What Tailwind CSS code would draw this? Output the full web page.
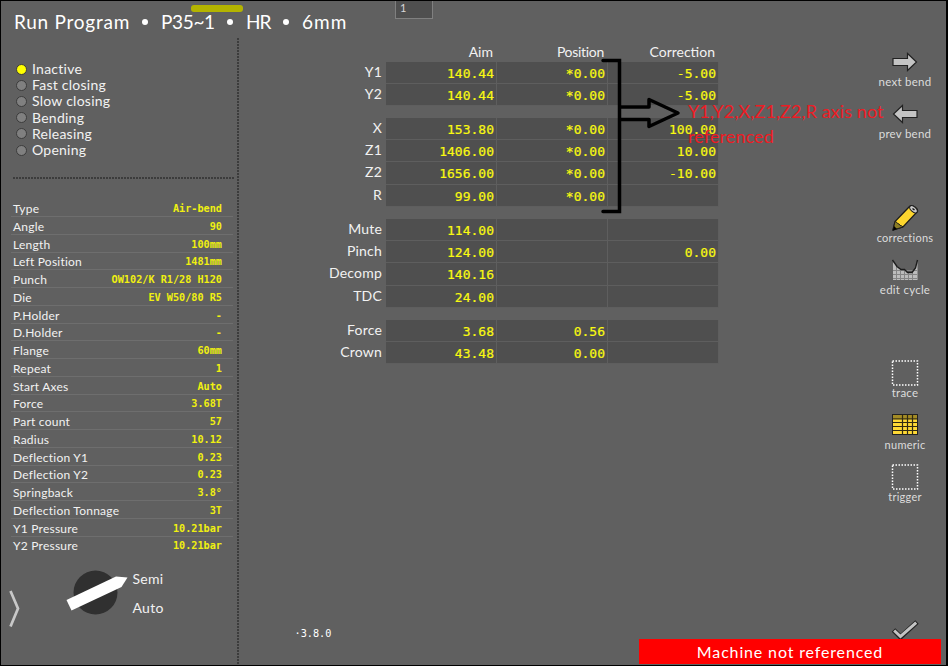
<!DOCTYPE html>
<html lang="en">
<head>
<meta charset="utf-8">
<title>Run Program</title>
<script src="https://cdn.jsdelivr.net/npm/@tailwindcss/browser@4"></script>
</head>
<body class="w-[948px] h-[666px] overflow-hidden bg-[#606060] font-[Lato,sans-serif] text-[#f2f2f2]">
<div class="relative w-[948px] h-[666px] border-t border-l border-r-2 border-b border-black flex">

  <!-- left column: title, machine state, program data, mode switch -->
  <aside class="w-[237px] shrink-0 flex flex-col">
    <h1 class="h-[42px] pl-[13px] flex items-center text-[19px] leading-6 whitespace-nowrap text-white">
      <span class="w-[125px] shrink-0 tracking-[0.750px]">Run Program</span>
      <span class="w-[22px] shrink-0"><i class="block size-[6px] rounded-full bg-white ml-[3px]"></i></span>
      <span class="w-[65px] shrink-0 tracking-[-0.350px]">P35~1</span>
      <span class="w-[20px] shrink-0"><i class="block size-[6px] rounded-full bg-white ml-px"></i></span>
      <span class="w-[36px] shrink-0 tracking-[-0.900px]">HR</span>
      <span class="w-[20px] shrink-0"><i class="block size-[6px] rounded-full bg-white ml-px"></i></span>
      <span class="shrink-0 tracking-[1px]">6mm</span>
    </h1>
    <ul id="states" class="mt-[18px] h-[98px] pl-[15px] text-[14px] tracking-[0.250px]"></ul>
    <div class="ml-3 mt-[18px] h-[2px] w-[222px] bg-[repeating-linear-gradient(90deg,#3c3c3c_0_2px,transparent_2px_3px)]"></div>
    <dl id="data" class="ml-[10px] mt-[20.300px] w-[222px] text-[12px]"></dl>
    <div class="relative mt-[13.700px] h-[66px] flex">
      <svg class="w-[128px] h-[66px] shrink-0" viewBox="0 0 128 66" fill="none">
        <circle cx="94.500" cy="24.500" r="22" fill="#303030"/>
        <path d="M65.500 32 115 8.500 126.500 9.500 120.500 19 70.500 42.500Z" fill="#fff"/>
        <path d="M9.500 23 17 40.500 9.500 58.500" stroke="#c8c8c8" stroke-width="2.700"/>
      </svg>
      <div class="pl-[3.500px] pt-px text-[14px] tracking-[0.3px] flex flex-col gap-[9px] leading-5">
        <span>Semi</span><span>Auto</span>
      </div>
    </div>
  </aside>
  <div class="mt-[37px] h-[626px] w-[2px] shrink-0 -ml-px bg-[repeating-linear-gradient(180deg,#3c3c3c_0_2px,transparent_2px_3px)]"></div>

  <!-- axis table -->
  <main class="w-[610px] shrink-0 flex flex-col">
    <div class="h-[18px] ml-[156px] w-[38px] bg-[#4f4f4f] border border-t-0 border-[#808080] text-[11px] leading-[14px] pl-[4px] text-[#d8d8d8]">1</div>
    <div class="mt-[24px] h-[18.500px] grid grid-cols-[147px_111px_111px_111px] text-right text-[14px] leading-[18px]">
      <span></span><span class="pr-[4px]">Aim</span><span class="pr-[4px] tracking-[-0.300px]">Position</span><span class="pr-[4px]">Correction</span>
    </div>
    <div id="axes" class="w-[480px] flex flex-col gap-[12.400px]"></div>
    <div class="mt-[264px] ml-[55.500px] font-[DejaVu_Sans_Mono,monospace] text-[10.200px] leading-3 text-white"><span>·3.8.0</span></div>
  </main>

  <!-- tool column -->
  <nav class="w-[88px] shrink-0 ml-[12px] mt-[48px] h-[600px] flex flex-col items-center text-[11.500px] leading-[14px] tracking-[0.250px] text-[#dcdcdc]">
    <div class="h-[52px] flex flex-col items-center">
      <svg class="w-[26px] h-[24px] shrink-0" viewBox="0 0 26 24"><path d="M1 9.500H15.500V4.500L24.500 13 15.500 21.500V16.500H1Z" fill="#c4c4c4" stroke="#222" stroke-width="1.200"/></svg>
      <span class="mt-[2px]">next bend</span>
    </div>
    <div class="h-[104px] flex flex-col items-center">
      <svg class="w-[26px] h-[24px] shrink-0" viewBox="0 0 26 24"><path d="M25 9.500H10.500V4.500L1.500 13 10.500 21.500V16.500H25Z" fill="#c4c4c4" stroke="#222" stroke-width="1.200"/></svg>
      <span class="mt-[2px]">prev bend</span>
    </div>
    <div class="h-[52px] flex flex-col items-center">
      <svg class="w-[28px] h-[26px] shrink-0" viewBox="0 0 28 26">
        <path d="M2 25 4 16.500 18.500 1.500Q20 0 23 1.500 27 3.500 26.500 6.500L12 22Z" fill="#fdd62e" stroke="#1c1c1c" stroke-width="1.300"/>
        <path d="M2 25 4 16.500Q5.500 16.500 6.500 18.500 8.500 18.500 9 20.500 11 20.500 12 22Z" fill="#8a7c26" stroke="#1c1c1c"/>
        <path d="M2 25.500 3 21 6 24Z" fill="#000"/>
        <ellipse cx="22.500" cy="4.300" rx="4.500" ry="2.500" transform="rotate(42 22.500 4.300)" fill="#c8c8c8" stroke="#1c1c1c"/>
        <path d="M21.500 3.500 23.500 5" stroke="#111" stroke-width="1.500"/>
      </svg>
      <span class="text-[11px]">corrections</span>
    </div>
    <div class="h-[103px] flex flex-col items-center">
      <svg class="w-[28px] h-[25px] shrink-0" viewBox="0 0 28 25">
        <path d="M2 3 6 9 10 12.500H14L17 15.500H21L24 12 26.500 3V23H2Z" fill="#bcbcbc"/>
        <path d="M2 13.500H26M2 17.500H26M2 21.500H26M5.500 9V23M9.500 12V23M13.500 13V23M17.500 15V23M21.500 15V23" stroke="#858585"/>
        <path d="M1.500 3 6 9.500 10 12.500H13.500L16.500 15.500H21L24.500 11 26.500 3" fill="none" stroke="#1c1c1c" stroke-width="1.400"/>
      </svg>
      <span class="mt-px">edit cycle</span>
    </div>
    <div class="h-[52px] flex flex-col items-center">
      <svg class="w-[28px] h-[26px] shrink-0" viewBox="0 0 28 26"><rect x="1.500" y="1" width="25" height="24" fill="none" stroke="#fff" stroke-width="1.500" stroke-dasharray="1.500 1.500"/></svg>
      <span>trace</span>
    </div>
    <div class="h-[52px] flex flex-col items-center">
      <svg class="w-[28px] h-[26px] shrink-0" viewBox="0 0 28 26">
        <rect x="1.500" y="2.500" width="25" height="20" fill="#fdd835" stroke="#222"/>
        <rect x="2" y="3" width="24" height="3.500" fill="#a38b25"/>
        <path d="M2 6.800H26M2 10.500H26M2 14.500H26M2 18.500H26M11.500 3V22M16.500 3V22M21.500 3V22" stroke="#302a12" stroke-width="1.200"/>
      </svg>
      <span class="text-[11px]">numeric</span>
    </div>
    <div class="h-[156px] flex flex-col items-center">
      <svg class="w-[28px] h-[26px] shrink-0" viewBox="0 0 28 26"><rect x="1.500" y="1" width="25" height="24" fill="none" stroke="#fff" stroke-width="1.500" stroke-dasharray="1.500 1.500"/></svg>
      <span class="text-[11px]">trigger</span>
    </div>
    <svg class="w-[28px] h-[20px] shrink-0" viewBox="0 0 28 20"><path d="M2.500 10 9.500 17 26 2" fill="none" stroke="#222" stroke-width="5"/><path d="M3.200 10.500 9.500 16.500 25.200 2.700" fill="none" stroke="#c4c4c4" stroke-width="3"/></svg>
  </nav>

  <!-- overlays -->
  <div class="absolute left-[190px] top-[4px] w-[52px] h-[7px] rounded-[3px] bg-[#b4b400]"></div>
  <svg class="absolute left-[600px] top-[56px] w-[84px] h-[160px]" viewBox="0 0 84 160" fill="none" stroke="#000" stroke-width="3.500">
    <path d="M2 3.500H18.500V154.500H2" stroke-linecap="round"/>
    <path d="M19 50H48V42.500L77 56 48 69.500V62.500H19" stroke-width="3.500" stroke-linejoin="round"/>
  </svg>
  <p class="absolute left-[687px] top-[98px] w-[205px] text-[18px] leading-[24.500px] text-[#ed1c24]"><span class="whitespace-nowrap tracking-[0.080px]">Y1,Y2,X,Z1,Z2,R axis not</span><br><span class="tracking-[0.100px]">referenced</span></p>
  <div class="absolute left-[638px] top-[638px] w-[302px] h-[25px] bg-[#ff0000] text-white text-center text-[16px] leading-[26px] tracking-[0.850px]">Machine not referenced</div>
</div>

<script>
const states = ["Inactive", "Fast closing", "Slow closing", "Bending", "Releasing", "Opening"];
document.getElementById("states").innerHTML = states.map((s, i) =>
  `<li class="h-[16.200px] flex items-center leading-4"><i class="block size-[11px] rounded-full border-[1.500px] border-[#3c3c3c] mr-[5px] ${i ? "bg-[#808080]" : "bg-[#ffff00]"}"></i>${s}</li>`).join("");

const data = [["Type","Air-bend"],["Angle","90"],["Length","100mm"],["Left Position","1481mm"],["Punch","OW102/K R1/28 H120"],["Die","EV W50/80 R5"],["P.Holder","-"],["D.Holder","-"],["Flange","60mm"],["Repeat","1"],["Start Axes","Auto"],["Force","3.68T"],["Part count","57"],["Radius","10.12"],["Deflection Y1","0.23"],["Deflection Y2","0.23"],["Springback","3.8°"],["Deflection Tonnage","3T"],["Y1 Pressure","10.21bar"],["Y2 Pressure","10.21bar"]];
document.getElementById("data").innerHTML = data.map(([k, v], i) =>
  `<div class="h-[17.760px] flex items-center justify-between pt-[3px] pl-[2px] pr-[11px] leading-[14px] border-b ${i < data.length - 1 ? "border-[#6e6e6e]" : "border-transparent"}"><dt class="tracking-[0.230px]">${k}</dt><dd class="font-[DejaVu_Sans_Mono,monospace] font-bold text-[10.200px] text-[#f0f010]">${v}</dd></div>`).join("");

const axes = [
  [["Y1","140.44","*0.00","-5.00"],["Y2","140.44","*0.00","-5.00"]],
  [["X","153.80","*0.00","100.00"],["Z1","1406.00","*0.00","10.00"],["Z2","1656.00","*0.00","-10.00"],["R","99.00","*0.00",""]],
  [["Mute","114.00","",""],["Pinch","124.00","","0.00"],["Decomp","140.16","",""],["TDC","24.00","",""]],
  [["Force","3.68","0.56",""],["Crown","43.48","0.00",""]]
];
document.getElementById("axes").innerHTML = axes.map(g => `<section>` + g.map(([name, ...cells]) =>
  `<div class="h-[22.150px] grid grid-rows-1 grid-cols-[147px_111px_111px_111px] text-right"><span class="pr-[4px] text-[14px] leading-5 tracking-[0.200px]">${name}</span>` +
  cells.map(c => `<span class="min-h-0 bg-[#4f4f4f] border-r border-b border-[#5e5e5e] pr-[2px] font-[DejaVu_Sans_Mono,monospace] text-[13px] leading-[23px] text-[#fafa10] [-webkit-text-stroke:0.2px_#fafa10]">${c}</span>`).join("") + `</div>`).join("") + `</section>`).join("");
</script>
</body>
</html>
